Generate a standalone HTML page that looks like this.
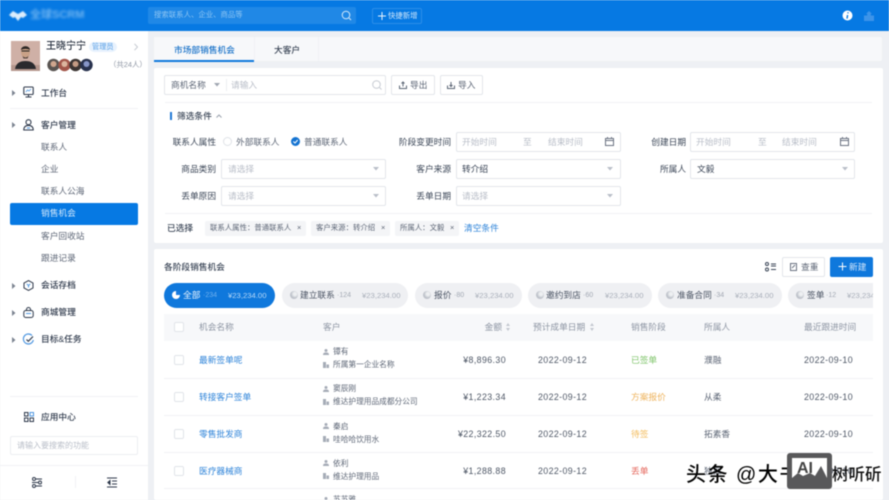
<!DOCTYPE html>
<html lang="zh-CN"><head><meta charset="utf-8"><title>销售机会</title>
<style>
*{box-sizing:border-box}
html,body{margin:0;padding:0;width:889px;height:500px;overflow:hidden;background:#eef0f4}
body{position:relative;font-family:"Liberation Sans","Noto Sans CJK SC",sans-serif;font-size:8.7px;color:#46505f}
#w{position:absolute;left:0;top:0;width:889px;height:500px;overflow:hidden;filter:blur(.4px)}
.a,.t{position:absolute}
.t{white-space:nowrap;line-height:12px;height:12px}
.r{text-align:right}
.b{border:1px solid #e3e6eb;border-radius:2px;background:#fff}
.ph{color:#b9bec8}.g{color:#8d95a3}.d{color:#3b4657}.bl{color:#2f84d9}
.m{font-weight:500;color:#2f3a4c}
.sub{color:#5d6676}
.line{position:absolute;height:1px;background:#f1f2f5}
.pill{position:absolute;top:283px;height:25px;border-radius:13px;background:#eff0f3}
.dot{position:absolute;top:291px;width:8px;height:8px;border-radius:50%;background:radial-gradient(circle at 62% 38%,#eef0f2 0 22%,#bfc3cb 55%)}
.pn{font-size:8.7px;color:#4a5363;top:289px}
.pc{font-size:7px;color:#a2a8b3;top:290px}
.pm{font-size:7.7px;color:#a9afba;top:290px}
.chip{position:absolute;top:221px;height:15px;background:#f4f5f7;border-radius:2px}
.ct{font-size:7.4px;color:#5d6676;top:222px}
.ck{position:absolute;left:174px;width:10px;height:10px;border:1px solid #e1e4e9;border-radius:2px;background:#fff}
.cu{font-size:7.7px;color:#5d6676}
.num{font-size:8.8px;color:#4d5665;letter-spacing:.4px}
svg{position:absolute;overflow:visible}
</style></head><body><div id="w">

<!-- header -->
<div class="a" style="left:0;top:0;width:889px;height:31px;background:#0679e3"></div>
<svg style="left:9px;top:10px" width="18" height="12" viewBox="0 0 18 12"><path d="M0 5 4 1l5 3 5-3 4 4-4 3-2-1-3 4-3-4-2 1z" fill="#dcedfc" style="filter:blur(.5px)"></path></svg>
<div class="t" style="left:30px;top:9px;font-size:11px;color:#6fb4f0;filter:blur(1.2px);font-weight:700">全球SCRM</div>
<div class="a" style="left:148px;top:7px;width:208px;height:17px;background:#2088e6;border-radius:2px"></div>
<div class="t" style="left:154px;top:9px;font-size:7.4px;color:#8dc5f3">搜索联系人、企业、商品等</div>
<svg style="left:341px;top:10px" width="11" height="11" viewBox="0 0 11 11" fill="none" stroke="#d5e9fb" stroke-width="1"><circle cx="5" cy="5" r="3.8"></circle><path d="M8 8l2 2"></path></svg>
<div class="a" style="left:372px;top:8px;width:50px;height:16px;border:1px solid #2c8de8;border-radius:2px"></div>
<svg style="left:377px;top:11px" width="10" height="10" viewBox="0 0 10 10" stroke="#e8f3fd" stroke-width="1"><path d="M5 1v8M1 5h8"></path></svg>
<div class="t" style="left:388px;top:10px;font-size:7.4px;color:#cfe6fb">快捷新增</div>
<svg style="left:842px;top:10px" width="11" height="11" viewBox="0 0 11 11"><circle cx="5.500" cy="5.500" r="5" fill="#fff"></circle><path d="M6 2.200v1.200M5.600 5 5 8.600" stroke="#0679e3" stroke-width="1.400"></path></svg>
<svg style="left:864px;top:11px" width="10" height="10" viewBox="0 0 11 11" fill="#3d94e9"><path d="M0 5h3.500V3H2.200L5.500 0l3.300 3H7.500v2H11v6H0z"></path></svg>

<!-- sidebar -->
<div class="a" style="left:0;top:31px;width:148px;height:469px;background:#fff"></div>
<svg style="left:11px;top:41px" width="29" height="30" viewBox="0 0 29 30"><rect width="29" height="30" fill="#cfb0a6"></rect><rect y="24" width="29" height="6" fill="#b4968c"></rect><path d="M4 28c1-6 5-8 10.500-8S24 22 25 28z" fill="#2a2a2d"></path><ellipse cx="14.500" cy="11" rx="4.500" ry="6" fill="#c9a187"></ellipse><path d="M10 9c0-5 9-5 9 0-3-1.500-6-1.500-9 0z" fill="#2c2725"></path><path d="M10.500 10h8" stroke="#222" stroke-width="1"></path><path d="M11.500 15c2 2 4 2 6 0l-1 2.500h-4z" fill="#4a3c36"></path></svg>
<div class="t" style="left:46px;top:41px;font-size:10px;color:#2a3342;font-weight:500">王晓宁宁</div>
<div class="a" style="left:89px;top:42px;width:28px;height:10px;background:#e8f2fd;border-radius:5px"></div>
<div class="t" style="left:92px;top:41px;font-size:7.200px;color:#5aa0e6">管理员</div>
<svg style="left:133px;top:43px" width="6" height="8" viewBox="0 0 6 8" fill="none" stroke="#c6cad2"><path d="M1.500 .8 4.500 4l-3 3.200"></path></svg>
<svg style="left:47px;top:58px" width="47" height="14" viewBox="0 0 47 14"><circle cx="6.500" cy="7" r="6.200" fill="#5a5552"></circle><circle cx="6.500" cy="6" r="3" fill="#cfa68e"></circle><circle cx="17.500" cy="7" r="6.200" fill="#a2564a"></circle><circle cx="17.500" cy="6" r="3" fill="#dcb59e"></circle><circle cx="28.500" cy="7" r="6.200" fill="#3c3533"></circle><circle cx="28.500" cy="6" r="3" fill="#c49b84"></circle><circle cx="39.500" cy="7" r="6.200" fill="#28324e"></circle><circle cx="39.500" cy="6" r="3" fill="#8796c8"></circle></svg>
<div class="t g" style="left:109px;top:59px;font-size:7.400px">（共24人）</div>

<svg style="left:12px;top:90px" width="4" height="6"><path d="M0 0l3.500 3L0 6z" fill="#7d8592"></path></svg>
<svg style="left:23px;top:86px" width="11" height="13" viewBox="0 0 11 13" fill="none" stroke="#2f3a4c" stroke-width="1.100"><rect x=".8" y="1" width="9.400" height="7.500" rx="1"></rect><path d="M2.500 11h6M5.500 8.500V11"></path><path d="M2.800 6 4.500 4l1.500 1 2-2" stroke="#4f97e0" stroke-width=".8"></path></svg>
<div class="t m" style="left:41px;top:87px">工作台</div>
<div class="line" style="left:10px;top:108px;width:128px"></div>

<svg style="left:12px;top:122px" width="4" height="6"><path d="M0 0l3.500 3L0 6z" fill="#7d8592"></path></svg>
<svg style="left:23px;top:119px" width="11" height="12" viewBox="0 0 11 12" fill="none" stroke="#2f3a4c" stroke-width="1.100"><circle cx="5.500" cy="3.200" r="2.500"></circle><path d="M.8 11c0-3 1.800-4.600 4.700-4.600S10.200 8 10.200 11z"></path><path d="M4 9h3" stroke="#4f97e0"></path></svg>
<div class="t m" style="left:41px;top:119px">客户管理</div>
<div class="t sub" style="left:41px;top:141px">联系人</div>
<div class="t sub" style="left:41px;top:163px">企业</div>
<div class="t sub" style="left:41px;top:185px">联系人公海</div>
<div class="a" style="left:10px;top:203px;width:128px;height:22px;background:#0679e3;border-radius:2px"></div>
<div class="t" style="left:41px;top:207px;color:#d4e9fc">销售机会</div>
<div class="t sub" style="left:41px;top:230px">客户回收站</div>
<div class="t sub" style="left:41px;top:252px">跟进记录</div>

<svg style="left:12px;top:283px" width="4" height="6"><path d="M0 0l3.500 3L0 6z" fill="#7d8592"></path></svg>
<svg style="left:23px;top:280px" width="11" height="11" viewBox="0 0 11 11" fill="none" stroke="#2f3a4c" stroke-width="1"><path d="M5.500 .6 10 3v5l-4.500 2.400L1 8V3z"></path><path d="M3.800 4 5.500 5.500 7.200 4M5.500 5.500v2" stroke="#4f97e0"></path></svg>
<div class="t m" style="left:41px;top:279px">会话存档</div>
<svg style="left:12px;top:310px" width="4" height="6"><path d="M0 0l3.500 3L0 6z" fill="#7d8592"></path></svg>
<svg style="left:23px;top:307px" width="11" height="11" viewBox="0 0 11 11" fill="none" stroke="#2f3a4c" stroke-width="1"><rect x=".8" y="3.500" width="9.400" height="7" rx="2"></rect><path d="M3.500 3.500V2.500a2 2 0 0 1 4 0v1"></path><path d="M3 6.500h5" stroke="#4f97e0"></path></svg>
<div class="t m" style="left:41px;top:306px">商城管理</div>
<svg style="left:12px;top:337px" width="4" height="6"><path d="M0 0l3.500 3L0 6z" fill="#7d8592"></path></svg>
<svg style="left:23px;top:334px" width="11" height="11" viewBox="0 0 11 11" fill="none" stroke-width="1.200"><path d="M9 1.500A5 5 0 1 0 10.300 6" stroke="#4f97e0"></path><path d="M3.500 5.500 5.300 7.300 10 2.500" stroke="#2f3a4c"></path></svg>
<div class="t m" style="left:41px;top:333px">目标&amp;任务</div>

<div class="line" style="left:10px;top:396px;width:128px"></div>
<svg style="left:24px;top:412px" width="10" height="10" viewBox="0 0 10 10" fill="none" stroke="#2f3a4c"><rect x=".5" y=".5" width="3.500" height="3.500"></rect><rect x="6" y=".5" width="3.500" height="3.500" stroke="#4f97e0"></rect><rect x=".5" y="6" width="3.500" height="3.500"></rect><rect x="6" y="6" width="3.500" height="3.500"></rect></svg>
<div class="t m" style="left:41px;top:411px">应用中心</div>
<div class="a b" style="left:10px;top:436px;width:128px;height:19px;border-color:#eceef1"></div>
<div class="t ph" style="left:17px;top:440px;font-size:8px">请输入要搜索的功能</div>
<div class="line" style="left:0;top:465px;width:148px"></div>
<div class="a" style="left:75px;top:476px;width:1px;height:12px;background:#f1f2f5"></div>
<svg style="left:32px;top:477px" width="10" height="11" viewBox="0 0 10 11" fill="none" stroke="#2f3a4c"><path d="M4 2h6M0 5.500h6M4 9h6"></path><circle cx="2" cy="2" r="1.500"></circle><circle cx="8" cy="5.500" r="1.500"></circle><circle cx="2" cy="9" r="1.500"></circle></svg>
<svg style="left:107px;top:477px" width="10" height="11" viewBox="0 0 10 11" fill="none" stroke="#2f3a4c"><path d="M0 1h10M5 4h5M5 7h5M0 10h10"></path><path d="M3 3.500 .8 5.500 3 7.500z" fill="#2f3a4c"></path></svg>

<!-- tabs -->
<div class="a" style="left:154px;top:37px;width:728px;height:24px;background:#f7f8fa;border-radius:2px"></div>
<div class="a" style="left:154px;top:37px;width:100px;height:25px;background:#f7f8fa;border-bottom:2px solid #0f78dc"></div>
<div class="a" style="left:254px;top:37px;width:65px;height:24px;background:#f7f8fa;border-left:1px solid #f1f2f5;border-right:1px solid #f1f2f5"></div>
<div class="t" style="left:174px;top:44px;color:#1c74c9;font-weight:500">市场部销售机会</div>
<div class="t d" style="left:274px;top:44px;font-weight:500">大客户</div>

<!-- filter card -->
<div class="a" style="left:154px;top:68px;width:729px;height:175px;background:#fff;border-radius:2px"></div>
<div class="a b" style="left:164px;top:75px;width:222px;height:20px"></div>
<div class="a" style="left:226px;top:79px;width:1px;height:12px;background:#eceef1"></div>
<div class="t sub" style="left:171px;top:79px">商机名称</div>
<svg style="left:214px;top:83px" width="6" height="4"><path d="M0 0h6L3 3.500z" fill="#a0a6b1"></path></svg>
<div class="t ph" style="left:231px;top:79px">请输入</div>
<svg style="left:372px;top:80px" width="10" height="10" viewBox="0 0 10 10" fill="none" stroke="#c6cad2"><circle cx="4.500" cy="4.500" r="3.800"></circle><path d="M7.500 7.500 9.500 9.500"></path></svg>
<div class="a b" style="left:391px;top:75px;width:44px;height:20px"></div>
<svg style="left:399px;top:81px" width="8" height="8" viewBox="0 0 8 8" fill="none" stroke="#5d6676"><path d="M.5 4.500v3h7v-3M4 5.500V1M2.500 2.500 4 1l1.500 1.500"></path></svg>
<div class="t sub" style="left:410px;top:79px">导出</div>
<div class="a b" style="left:440px;top:75px;width:43px;height:20px"></div>
<svg style="left:447px;top:81px" width="8" height="8" viewBox="0 0 8 8" fill="none" stroke="#5d6676"><path d="M.5 4.500v3h7v-3M4 1v4.500M2.500 4 4 5.500 5.500 4"></path></svg>
<div class="t sub" style="left:458px;top:79px">导入</div>
<div class="line" style="left:165px;top:102px;width:707px"></div>

<div class="a" style="left:170px;top:112px;width:2px;height:8px;background:#1f78d6"></div>
<div class="t d" style="left:177px;top:110px;font-weight:500">筛选条件</div>
<svg style="left:216px;top:114px" width="6" height="4" fill="none" stroke="#9aa1ad"><path d="M.5 3.500 3 1l2.500 2.500"></path></svg>

<div class="t d r" style="left:156px;top:136px;width:60px">联系人属性</div>
<div class="a" style="left:223px;top:137px;width:9px;height:9px;border:1px solid #dfe2e7;border-radius:50%"></div>
<div class="t sub" style="left:236px;top:136px">外部联系人</div>
<svg style="left:291px;top:137px" width="9" height="9" viewBox="0 0 9 9"><circle cx="4.500" cy="4.500" r="4.500" fill="#1473d1"></circle><path d="M2.300 4.500 4 6l2.700-3" stroke="#fff" fill="none"></path></svg>
<div class="t sub" style="left:304px;top:136px">普通联系人</div>

<div class="t d r" style="left:391px;top:136px;width:60px">阶段变更时间</div>
<div class="a b" style="left:456px;top:132px;width:165px;height:20px"></div>
<div class="t ph" style="left:462px;top:136px">开始时间</div>
<div class="t ph" style="left:523px;top:136px">至</div>
<div class="t ph" style="left:548px;top:136px">结束时间</div>
<svg style="left:605px;top:137px" width="9" height="9" viewBox="0 0 9 9" fill="none" stroke="#6b7382"><rect x=".5" y="1.500" width="8" height="7"></rect><path d="M.5 3.500h8M2.500 0v2M6.500 0v2"></path></svg>

<div class="t d r" style="left:626px;top:136px;width:60px">创建日期</div>
<div class="a b" style="left:690px;top:132px;width:165px;height:20px"></div>
<div class="t ph" style="left:696px;top:136px">开始时间</div>
<div class="t ph" style="left:758px;top:136px">至</div>
<div class="t ph" style="left:782px;top:136px">结束时间</div>
<svg style="left:840px;top:137px" width="9" height="9" viewBox="0 0 9 9" fill="none" stroke="#6b7382"><rect x=".5" y="1.500" width="8" height="7"></rect><path d="M.5 3.500h8M2.500 0v2M6.500 0v2"></path></svg>

<div class="t d r" style="left:156px;top:163px;width:60px">商品类别</div>
<div class="a b" style="left:221px;top:159px;width:165px;height:20px"></div>
<div class="t ph" style="left:228px;top:163px">请选择</div>
<svg style="left:373px;top:167px" width="6" height="4"><path d="M0 0h6L3 3.500z" fill="#b9bec8"></path></svg>
<div class="t d r" style="left:391px;top:163px;width:60px">客户来源</div>
<div class="a b" style="left:456px;top:159px;width:165px;height:20px"></div>
<div class="t d" style="left:462px;top:163px">转介绍</div>
<svg style="left:607px;top:167px" width="6" height="4"><path d="M0 0h6L3 3.500z" fill="#b9bec8"></path></svg>
<div class="t d r" style="left:626px;top:163px;width:60px">所属人</div>
<div class="a b" style="left:690px;top:159px;width:165px;height:20px"></div>
<div class="t d" style="left:697px;top:163px">文毅</div>
<svg style="left:842px;top:167px" width="6" height="4"><path d="M0 0h6L3 3.500z" fill="#b9bec8"></path></svg>

<div class="t d r" style="left:156px;top:190px;width:60px">丢单原因</div>
<div class="a b" style="left:221px;top:186px;width:165px;height:20px"></div>
<div class="t ph" style="left:228px;top:190px">请选择</div>
<svg style="left:373px;top:194px" width="6" height="4"><path d="M0 0h6L3 3.500z" fill="#b9bec8"></path></svg>
<div class="t d r" style="left:391px;top:190px;width:60px">丢单日期</div>
<div class="a b" style="left:456px;top:186px;width:165px;height:20px"></div>
<div class="t ph" style="left:462px;top:190px">请选择</div>
<svg style="left:607px;top:194px" width="6" height="4"><path d="M0 0h6L3 3.500z" fill="#b9bec8"></path></svg>
<div class="line" style="left:165px;top:213px;width:707px"></div>

<div class="t d" style="left:167px;top:222px;font-weight:500">已选择</div>
<div class="chip" style="left:205px;width:101px"></div>
<div class="t ct" style="left:210px">联系人属性：普通联系人</div>
<div class="t ct" style="left:297px">×</div>
<div class="chip" style="left:311px;width:79px"></div>
<div class="t ct" style="left:316px">客户来源：转介绍</div>
<div class="t ct" style="left:381px">×</div>
<div class="chip" style="left:395px;width:64px"></div>
<div class="t ct" style="left:400px">所属人：文毅</div>
<div class="t ct" style="left:450px">×</div>
<div class="t bl" style="left:464px;top:222px">清空条件</div>

<!-- list card -->
<div class="a" style="left:154px;top:249px;width:729px;height:251px;background:#fff;border-radius:2px"></div>
<div class="t d" style="left:164px;top:261px;font-weight:500">各阶段销售机会</div>
<svg style="left:765px;top:262px" width="11" height="10" viewBox="0 0 11 10" fill="none" stroke="#3b4657"><rect x=".5" y=".5" width="3" height="3" rx="1.500"></rect><rect x=".5" y="6" width="3" height="3" rx="1.500"></rect><path d="M6 2h5M6 4h5M6 7.500h5"></path></svg>
<div class="a b" style="left:782px;top:257px;width:43px;height:20px"></div>
<svg style="left:790px;top:263px" width="7" height="8" viewBox="0 0 7 8" fill="none" stroke="#6b7382"><rect x=".5" y=".5" width="6" height="7"></rect><path d="M2 5l3-3"></path></svg>
<div class="t sub" style="left:801px;top:261px">查重</div>
<div class="a" style="left:830px;top:257px;width:43px;height:20px;background:#0f78dc;border-radius:2px"></div>
<svg style="left:838px;top:262px" width="9" height="9" stroke="#fff"><path d="M4.500 .5v8M.5 4.500h8"></path></svg>
<div class="t" style="left:849px;top:261px;color:#cfe5fb">新建</div>

<div class="pill" style="left:164px;width:111px;background:#0f78dc"></div>
<div class="dot" style="left:172px;background:conic-gradient(#1a7be0 0 25%,#fff 25%)"></div>
<div class="t" style="left:183px;top:289px;color:#e6f2fd">全部</div>
<div class="t pc" style="left:203px;color:#6fb0ee">·234</div>
<div class="t pm" style="left:228px;color:#b5d8f8">¥23,234.00</div>

<div class="pill" style="left:282px;width:126px"></div><div class="dot" style="left:290px"></div>
<div class="t pn" style="left:300px">建立联系</div><div class="t pc" style="left:337px">·124</div><div class="t pm" style="left:362px">¥23,234.00</div>
<div class="pill" style="left:415px;width:107px"></div><div class="dot" style="left:423px"></div>
<div class="t pn" style="left:434px">报价</div><div class="t pc" style="left:454px">·80</div><div class="t pm" style="left:475px">¥23,234.00</div>
<div class="pill" style="left:528px;width:124px"></div><div class="dot" style="left:536px"></div>
<div class="t pn" style="left:546px">邀约到店</div><div class="t pc" style="left:583px">·60</div><div class="t pm" style="left:605px">¥23,234.00</div>
<div class="pill" style="left:658px;width:124px"></div><div class="dot" style="left:666px"></div>
<div class="t pn" style="left:677px">准备合同</div><div class="t pc" style="left:714px">·34</div><div class="t pm" style="left:735px">¥23,234.00</div>
<div class="a" style="left:788px;top:283px;width:85px;height:25px;overflow:hidden">
<div class="a" style="left:0;top:0;width:110px;height:25px;border-radius:13px;background:#eff0f3"></div>
<div class="dot" style="left:8px;top:8px"></div>
<div class="t pn" style="left:19px;top:6px">签单</div><div class="t pc" style="left:38px;top:7px">·12</div><div class="t pm" style="left:59px;top:7px">¥23,234.00</div>
</div>

<!-- table head -->
<div class="a" style="left:164px;top:314px;width:709px;height:27px;background:#f7f8fa"></div>
<div class="ck" style="top:322px"></div>
<div class="t g" style="left:199px;top:321px">机会名称</div>
<div class="t g" style="left:323px;top:321px">客户</div>
<div class="t g r" style="left:442px;top:321px;width:60px">金额</div>
<svg style="left:506px;top:323px" width="4" height="8" fill="#c3c8d0"><path d="M2 0l2 3H0zM2 8 0 5h4z"></path></svg>
<div class="t g" style="left:533px;top:321px">预计成单日期</div>
<svg style="left:590px;top:323px" width="4" height="8" fill="#c3c8d0"><path d="M2 0l2 3H0zM2 8 0 5h4z"></path></svg>
<div class="t g" style="left:631px;top:321px">销售阶段</div>
<div class="t g" style="left:704px;top:321px">所属人</div>
<div class="t g" style="left:804px;top:321px">最近跟进时间</div>

<!-- row 1 -->
<div class="ck" style="top:355px"></div>
<div class="t bl" style="left:199px;top:354px">最新签单呢</div>
<svg style="left:323px;top:349px" width="6" height="6" fill="#a6acb7"><path d="M3 0a1.500 1.500 0 1 1 0 3 1.500 1.500 0 0 1 0-3zM0 6c0-2 1-2.500 3-2.500S6 4 6 6z"></path></svg>
<div class="t cu" style="left:333px;top:346px">镡有</div>
<svg style="left:323px;top:362px" width="6" height="6" fill="#a6acb7"><path d="M0 0h3v6H0zM3.500 2.500H6V6H3.500z"></path></svg>
<div class="t cu" style="left:333px;top:359px">所属第一企业名称</div>
<div class="t num r" style="left:426px;top:354px;width:80px">¥8,896.30</div>
<div class="t num" style="left:538px;top:354px">2022-09-12</div>
<div class="t" style="left:631px;top:354px;color:#7fc46a">已签单</div>
<div class="t sub" style="left:704px;top:354px">濮融</div>
<div class="t num" style="left:804px;top:354px">2022-09-10</div>
<div class="line" style="left:164px;top:378px;width:709px"></div>

<!-- row 2 -->
<div class="ck" style="top:392px"></div>
<div class="t bl" style="left:199px;top:391px">转接客户签单</div>
<svg style="left:323px;top:386px" width="6" height="6" fill="#a6acb7"><path d="M3 0a1.500 1.500 0 1 1 0 3 1.500 1.500 0 0 1 0-3zM0 6c0-2 1-2.500 3-2.500S6 4 6 6z"></path></svg>
<div class="t cu" style="left:333px;top:383px">窦辰刚</div>
<svg style="left:323px;top:399px" width="6" height="6" fill="#a6acb7"><path d="M0 0h3v6H0zM3.500 2.500H6V6H3.500z"></path></svg>
<div class="t cu" style="left:333px;top:396px">维达护理用品成都分公司</div>
<div class="t num r" style="left:426px;top:391px;width:80px">¥1,223.34</div>
<div class="t num" style="left:538px;top:391px">2022-09-12</div>
<div class="t" style="left:631px;top:391px;color:#eeb35c">方案报价</div>
<div class="t sub" style="left:704px;top:391px">从柔</div>
<div class="t num" style="left:804px;top:391px">2022-09-10</div>
<div class="line" style="left:164px;top:415px;width:709px"></div>

<!-- row 3 -->
<div class="ck" style="top:429px"></div>
<div class="t bl" style="left:199px;top:428px">零售批发商</div>
<svg style="left:323px;top:423px" width="6" height="6" fill="#a6acb7"><path d="M3 0a1.500 1.500 0 1 1 0 3 1.500 1.500 0 0 1 0-3zM0 6c0-2 1-2.500 3-2.500S6 4 6 6z"></path></svg>
<div class="t cu" style="left:333px;top:421px">秦启</div>
<svg style="left:323px;top:436px" width="6" height="6" fill="#a6acb7"><path d="M0 0h3v6H0zM3.500 2.500H6V6H3.500z"></path></svg>
<div class="t cu" style="left:333px;top:434px">哇哈哈饮用水</div>
<div class="t num r" style="left:426px;top:428px;width:80px">¥22,322.50</div>
<div class="t num" style="left:538px;top:428px">2022-09-12</div>
<div class="t" style="left:631px;top:428px;color:#f3bd5f">待签</div>
<div class="t sub" style="left:704px;top:428px">拓素香</div>
<div class="t num" style="left:804px;top:428px">2022-09-10</div>
<div class="line" style="left:164px;top:452px;width:709px"></div>

<!-- row 4 -->
<div class="ck" style="top:466px"></div>
<div class="t bl" style="left:199px;top:465px">医疗器械商</div>
<svg style="left:323px;top:460px" width="6" height="6" fill="#a6acb7"><path d="M3 0a1.500 1.500 0 1 1 0 3 1.500 1.500 0 0 1 0-3zM0 6c0-2 1-2.500 3-2.500S6 4 6 6z"></path></svg>
<div class="t cu" style="left:333px;top:458px">依利</div>
<svg style="left:323px;top:473px" width="6" height="6" fill="#a6acb7"><path d="M0 0h3v6H0zM3.500 2.500H6V6H3.500z"></path></svg>
<div class="t cu" style="left:333px;top:471px">维达护理用品</div>
<div class="t num r" style="left:426px;top:465px;width:80px">¥1,288.88</div>
<div class="t num" style="left:538px;top:465px">2022-09-12</div>
<div class="t" style="left:631px;top:465px;color:#e5675c">丢单</div>
<div class="t sub" style="left:704px;top:465px">独孤</div>
<div class="t num" style="left:804px;top:465px">2022-09-10</div>
<div class="line" style="left:164px;top:488px;width:709px"></div>

<!-- row 5 clipped -->
<div class="t cu" style="left:333px;top:494px">苏苏雅</div>
<svg style="left:323px;top:497px" width="6" height="6" fill="#a6acb7"><path d="M3 0a1.500 1.500 0 1 1 0 3 1.500 1.500 0 0 1 0-3zM0 6c0-2 1-2.500 3-2.500S6 4 6 6z"></path></svg>

<!-- watermark -->
<div class="t" style="left:686px;top:462px;height:26px;line-height:26px;font-size:20px;letter-spacing:1.500px;color:#000;font-weight:500">头条 @大书</div>
<div class="t" style="left:832px;top:465px;height:20px;line-height:20px;font-size:16.500px;color:#111;font-weight:500">树听斫</div>
<div class="a" style="left:787px;top:453px;width:45px;height:36px;background:#58585a;border-radius:3px"></div>
<div class="a" style="left:792px;top:458px;width:35px;height:24px;background:#fff"></div>
<svg style="left:792px;top:458px" width="35" height="24" viewBox="0 0 35 24"><path d="M0 24v-4l6-5 5 3 7-3 5 3 6-10 6 12v4z" fill="#58585a"></path></svg>
<div class="t" style="left:797px;top:461px;font-size:16px;font-weight:700;color:#444;line-height:16px;height:16px">AI</div>
</div></body></html>
